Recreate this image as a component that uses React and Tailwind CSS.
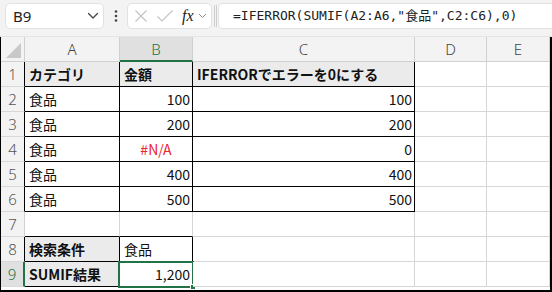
import React from "react";

const G = "#d6d6d6"; // grid
const K = "#000000";
const GR = "#217346";

const cols = [
  { key: "A", w: "w-[95px]" },
  { key: "B", w: "w-[73px]" },
  { key: "C", w: "w-[222px]" },
  { key: "D", w: "w-[72px]" },
  { key: "E", w: "flex-1" },
];

// cell data: [text, align, bold, fill, color]
const rows = [
  [["カテゴリ", "l", true, true], ["金額", "l", true, true], ["IFERRORでエラーを0にする", "l", true, true], null, null],
  [["食品", "l"], ["100", "r"], ["100", "r"], null, null],
  [["食品", "l"], ["200", "r"], ["200", "r"], null, null],
  [["食品", "l"], ["#N/A", "c", false, false, "#e8262b"], ["0", "r"], null, null],
  [["食品", "l"], ["400", "r"], ["400", "r"], null, null],
  [["食品", "l"], ["500", "r"], ["500", "r"], null, null],
  [null, null, null, null, null],
  [["検索条件", "l", true, true], ["食品", "l"], null, null, null],
  [["SUMIF結果", "l", true, true], ["1,200", "r"], null, null, null],
];

function isBlack(r, c) {
  if (r >= 0 && r <= 5 && c <= 2) return true;
  if ((r === 7 || r === 8) && c <= 1) return true;
  return false;
}

function Chevron({ className }) {
  return (
    <svg className={className} width="12" height="8" viewBox="0 0 12 8" fill="none">
      <path d="M1.5 1.5 L6 6 L10.5 1.5" stroke="#444" strokeWidth="1.3" strokeLinecap="round" strokeLinejoin="round" />
    </svg>
  );
}

export default function App() {
  const font = { fontFamily: '"Noto Sans CJK JP", "Noto Sans", sans-serif' };
  return (
    <div className="w-[552px] h-[292px] bg-white overflow-hidden" style={font}>
      {/* toolbar */}
      <div className="h-[37px] bg-[#f3f3f3] border-b border-[#e4e4e4] flex items-start pt-[3px] pl-[5px] gap-0">
        <div className="w-[99px] h-[26px] bg-white rounded-[5px] border border-[#e2e2e2] flex items-center justify-between pl-[7px] pr-[4px]">
          <span className="text-[15px] text-[#222] leading-none" style={{ fontFamily: '"Noto Sans", sans-serif' }}>B9</span>
          <Chevron />
        </div>
        <div className="w-[23px] h-[26px] flex items-center justify-center text-[#444]">
          <svg width="4" height="14" viewBox="0 0 4 14"><circle cx="2" cy="2.5" r="1.3" fill="#444" /><circle cx="2" cy="7" r="1.3" fill="#444" /><circle cx="2" cy="11.5" r="1.3" fill="#444" /></svg>
        </div>
        <div className="w-[85px] h-[26px] bg-white rounded-[5px] border border-[#e2e2e2] flex items-center pl-[5px] pr-[3px]">
          <svg width="14" height="14" viewBox="0 0 14 14" className="ml-[1px]"><path d="M1.5 1.5 L12.5 12.5 M12.5 1.5 L1.5 12.5" stroke="#c4c4c4" strokeWidth="1.2" /></svg>
          <svg width="18" height="14" viewBox="0 0 18 14" className="ml-[8px]"><path d="M1.5 7.5 L6 12 L16.5 1.5" stroke="#c4c4c4" strokeWidth="1.2" fill="none" /></svg>
          <span className="ml-[8px] text-[16px] italic text-[#222] leading-none" style={{ fontFamily: '"Liberation Serif", serif' }}>fx</span>
          <svg width="9" height="6" viewBox="0 0 9 6" className="ml-[4px]"><path d="M1 1 L4.5 4.5 L8 1" stroke="#888" strokeWidth="1" fill="none" /></svg>
        </div>
        <div className="w-[6px] h-[26px] flex items-center justify-center">
          <div className="w-[3px] h-[22px] border-x border-[#cfcfcf]" />
        </div>
        <div className="flex-1 h-[26px] bg-white rounded-l-[5px] border border-r-0 border-[#e2e2e2] flex items-center pl-[14px]">
          <span className="text-[13px] text-[#222] whitespace-nowrap" style={{ fontFamily: '"DejaVu Sans Mono", "Noto Sans CJK JP", monospace' }}>
            =IFERROR(SUMIF(A2:A6,"食品",C2:C6),0)
          </span>
        </div>
      </div>

      {/* grid */}
      <div className="h-[255px] border-l border-r-2 border-b-2 border-black">
        {/* column header row */}
        <div className="flex h-[25px] bg-[#f3f3f3]">
          <div className="w-[24px] h-[25px] border-r border-b border-[#d0d0d0] relative">
            <svg width="24" height="24" viewBox="0 0 24 24" className="absolute left-0 top-0">
              <path d="M20 6 L20 21 L5 21 Z" fill="#c8c8c8" />
            </svg>
          </div>
          {cols.map((c) => {
            const sel = c.key === "B";
            return (
              <div
                key={c.key}
                className={`${c.w} h-[25px] flex items-center justify-center text-[15px] border-r ${sel ? "bg-[#e0e0e0] text-[#217346] border-b-2 border-b-[#217346] border-r-[#d0d0d0]" : "text-[#444] border-b border-[#d0d0d0]"}`}
                style={{ fontFamily: '"Noto Sans", sans-serif', fontWeight: 300 }}
              >
                <span className={sel ? "pt-[2px]" : ""}>{c.key}</span>
              </div>
            );
          })}
        </div>
        {rows.map((row, r) => (
          <div key={r} className="flex h-[25px]">
            <div
              className={`w-[24px] h-[25px] flex items-center justify-center text-[15px] border-b border-[#d8d8d8] ${r === 8 ? "bg-[#e0e0e0] text-[#217346] border-r-2 border-r-[#217346]" : "bg-[#f3f3f3] text-[#555] border-r"} ${r !== 8 && isBlack(r, 0) ? "border-r-black" : ""} ${r === 6 ? "border-r-[#d0d0d0]" : ""}`}
              style={{ fontFamily: '"Noto Sans", sans-serif', fontWeight: 300 }}
            >
              {r + 1}
            </div>
            {cols.map((c, ci) => {
              const cell = row[ci];
              const black = isBlack(r, ci);
              const rightBlack = black || isBlack(r, ci + 1);
              const bottomBlack = black || isBlack(r + 1, ci);
              const [text, align, bold, fill, color] = cell || [];
              const active = r === 8 && ci === 1;
              return (
                <div
                  key={ci}
                  className={`${c.w} h-[25px] border-r border-b flex items-center relative text-[14px] ${fill ? "bg-[#ebebeb]" : "bg-white"} ${align === "r" ? "justify-end pr-[2px]" : align === "c" ? "justify-center" : "justify-start pl-[4px]"} ${bold ? "font-bold" : ""}`}
                  style={{
                    borderRightColor: rightBlack ? K : G,
                    borderBottomColor: bottomBlack ? K : G,
                    color: color || "#111",
                  }}
                >
                  {text ? <span className="leading-none">{text}</span> : null}
                  {active ? (
                    <>
                      <div className="absolute left-[-2px] top-[-1px] right-[-2px] bottom-[-2px] border-2 border-[#217346]" />
                      <div className="absolute right-[-4px] bottom-[-4px] w-[6px] h-[6px] bg-[#217346] border border-white" />
                    </>
                  ) : null}
                </div>
              );
            })}
          </div>
        ))}
      </div>
    </div>
  );
}
